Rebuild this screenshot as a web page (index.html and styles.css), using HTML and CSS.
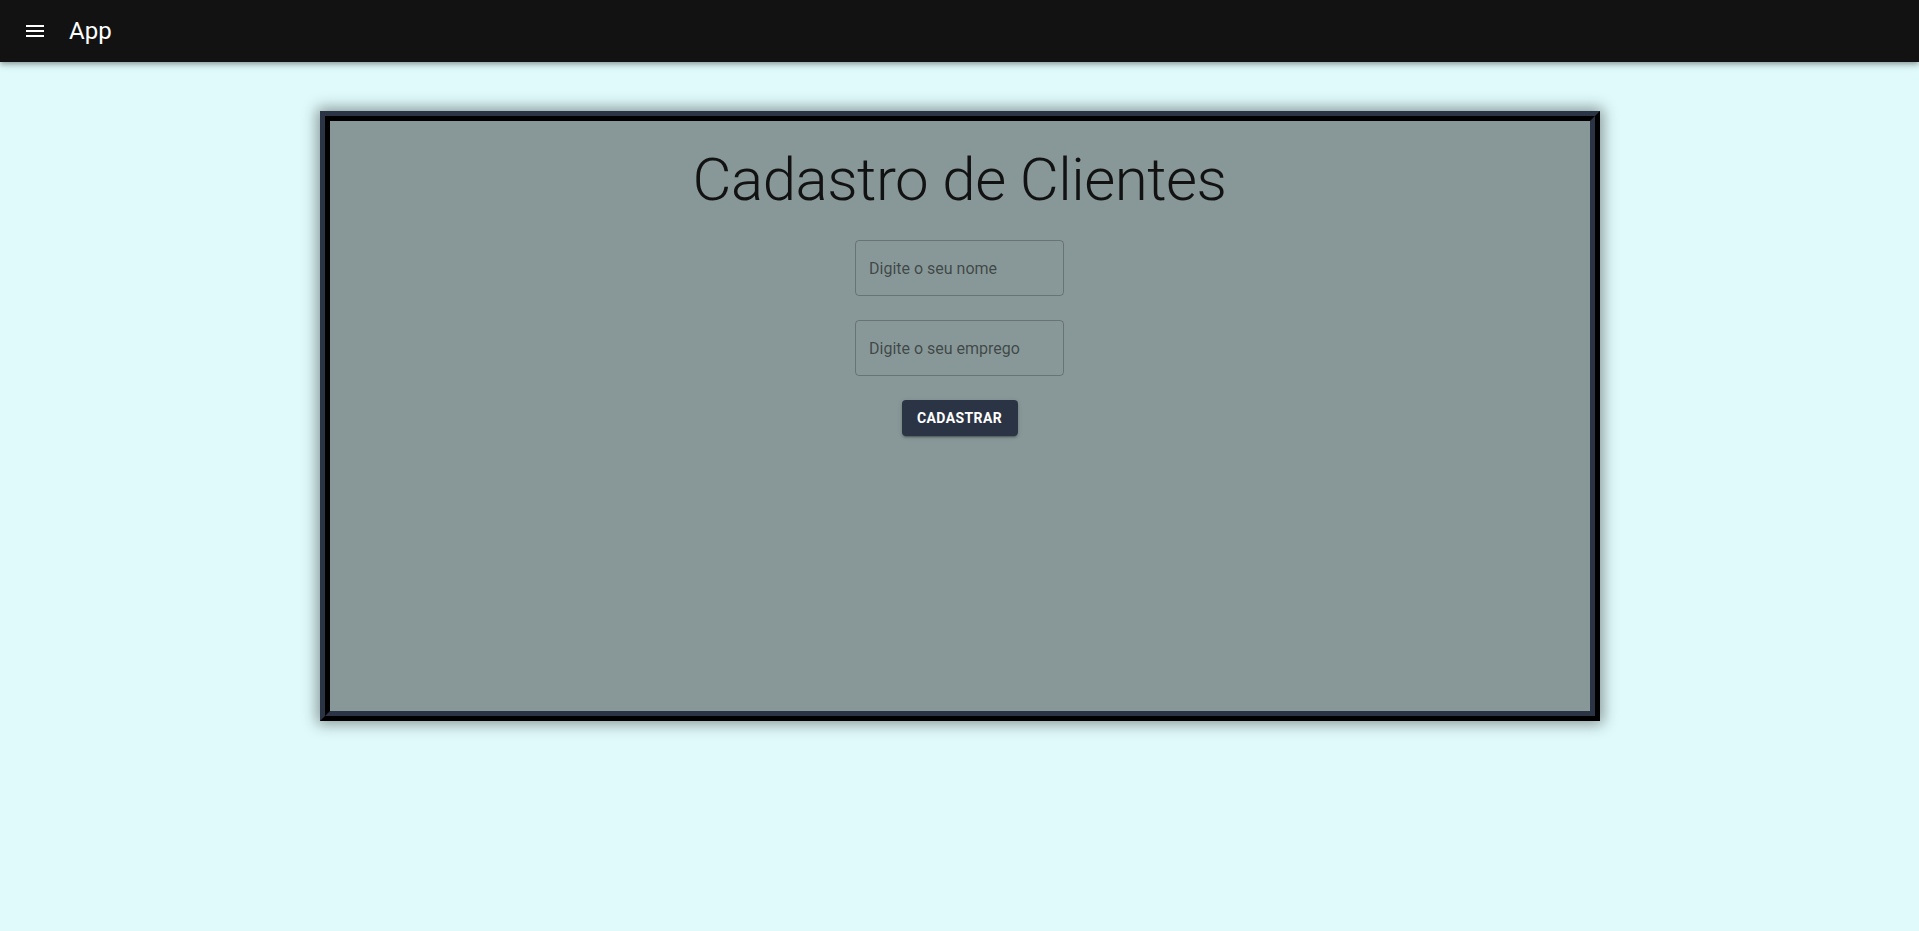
FILE: index.html
```html
<!DOCTYPE html>
<html lang="pt">
<head>
<meta charset="utf-8">
<title>App</title>
<link rel="stylesheet" href="styles.css">
</head>
<body>
<header class="appbar">
  <button class="menu-btn" aria-label="menu">
    <svg viewBox="0 0 24 24" width="24" height="24"><path fill="#fff" d="M3 18h18v-2H3v2zm0-5h18v-2H3v2zm0-7v2h18V6H3z"/></svg>
  </button>
  <span class="app-title">App</span>
</header>
<main class="page">
  <div class="card">
    <div class="card-inner">
      <h2 class="title">Cadastro de Clientes</h2>
      <input class="field" type="text" placeholder="Digite o seu nome">
      <input class="field" type="text" placeholder="Digite o seu emprego">
      <button class="submit">Cadastrar</button>
    </div>
  </div>
</main>
</body>
</html>
```
FILE: styles.css
```css
* { box-sizing: border-box; }
html, body { margin: 0; padding: 0; }
body {
  background: #e0fafb;
  font-family: Roboto, "Liberation Sans", sans-serif;
  min-height: 931px;
}
.appbar {
  height: 62px;
  background: #121212;
  display: flex;
  align-items: center;
  padding-left: 23px;
  box-shadow: 0 2px 4px -1px rgba(0,0,0,.2), 0 4px 5px 0 rgba(0,0,0,.14), 0 1px 10px 0 rgba(0,0,0,.12);
  position: relative;
  z-index: 2;
}
.menu-btn {
  background: none;
  border: 0;
  padding: 0;
  width: 24px;
  height: 24px;
  display: flex;
  cursor: pointer;
}
.app-title {
  color: #fff;
  font-size: 24px;
  font-weight: 400;
  margin-left: 22px;
  line-height: 1;
}
.page {
  padding-top: 49px;
  display: flex;
  justify-content: center;
}
.card {
  width: 1280px;
  height: 610px;
  border: 5px solid;
  border-color: #2b3445 #000 #000 #2b3445;
  box-shadow: 0 0 14px 3px rgba(0,0,0,.4);
}
.card-inner {
  height: 100%;
  border: 5px solid;
  border-color: #000 #2b3445 #2b3445 #000;
  background: #889898;
  padding-top: 23px;
  display: flex;
  flex-direction: column;
  align-items: center;
  gap: 24px;
}
.title {
  margin: 0;
  font-size: 60px;
  font-weight: 300;
  line-height: 72px;
  color: #121212;
  letter-spacing: -0.5px;
}
.field {
  width: 209px;
  height: 56px;
  border: 1px solid rgba(0,0,0,.23);
  border-radius: 4px;
  background: transparent;
  padding: 0 13px;
  font-family: Roboto, "Liberation Sans", sans-serif;
  font-size: 16px;
  color: #222;
  outline: none;
}
.field::placeholder { color: rgba(0,0,0,.55); opacity: 1; }
.submit {
  width: 116px;
  height: 36px;
  border: 0;
  border-radius: 4px;
  background: #2b3445;
  color: #fff;
  font-family: Roboto, "Liberation Sans", sans-serif;
  font-size: 14px;
  font-weight: 700;
  text-transform: uppercase;
  letter-spacing: 0.4px;
  box-shadow: 0 3px 1px -2px rgba(0,0,0,.2), 0 2px 2px 0 rgba(0,0,0,.14), 0 1px 5px 0 rgba(0,0,0,.12);
  cursor: pointer;
}
```
